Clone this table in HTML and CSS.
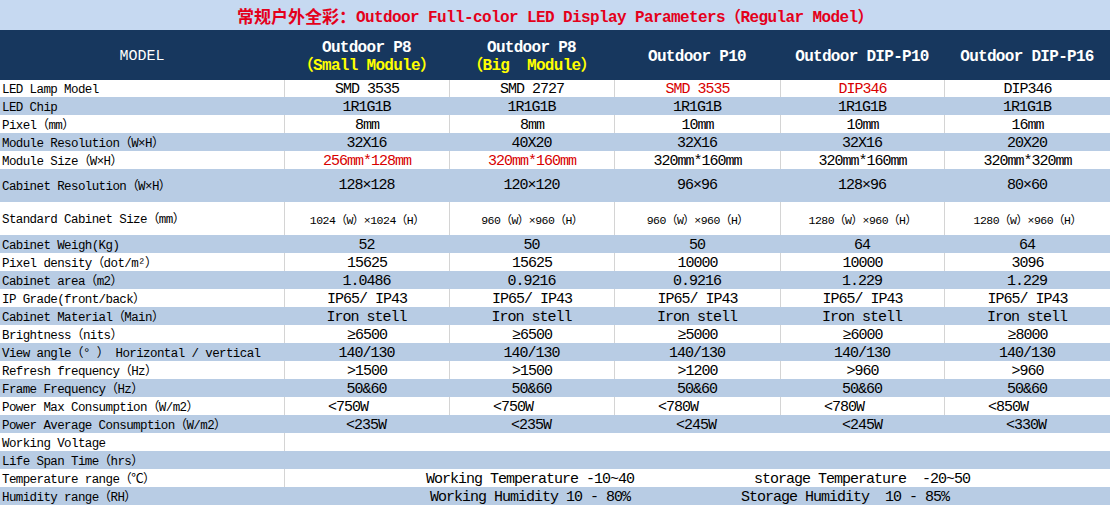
FILE: index.html
```html
<!DOCTYPE html>
<html>
<head>
<meta charset="utf-8">
<link rel="stylesheet" href="styles.css">
</head>
<body>
<div class="sheet">
  <div class="title"><span class="cn">常规户外全彩：</span>Outdoor Full-color LED Display Parameters（Regular Model）</div>

  <div class="row head">
    <div class="model">MODEL</div>
    <div><span>Outdoor P8</span><span class="yel">（Small Module）</span></div>
    <div><span>Outdoor P8</span><span class="yel">（Big&nbsp; Module）</span></div>
    <div><span>Outdoor P10</span></div>
    <div><span>Outdoor DIP-P10</span></div>
    <div><span>Outdoor DIP-P16</span></div>
  </div>

  <div class="row w first">
    <div class="lbl">LED Lamp Model</div>
    <div>SMD 3535</div><div>SMD 2727</div><div class="red">SMD 3535</div><div class="red">DIP346</div><div>DIP346</div>
  </div>
  <div class="row b">
    <div class="lbl">LED Chip</div>
    <div>1R1G1B</div><div>1R1G1B</div><div>1R1G1B</div><div>1R1G1B</div><div>1R1G1B</div>
  </div>
  <div class="row w">
    <div class="lbl">Pixel（mm）</div>
    <div>8mm</div><div>8mm</div><div>10mm</div><div>10mm</div><div>16mm</div>
  </div>
  <div class="row b">
    <div class="lbl">Module Resolution（W×H）</div>
    <div>32X16</div><div>40X20</div><div>32X16</div><div>32X16</div><div>20X20</div>
  </div>
  <div class="row w">
    <div class="lbl">Module Size（W×H）</div>
    <div class="red">256mm*128mm</div><div class="red">320mm*160mm</div><div>320mm*160mm</div><div>320mm*160mm</div><div>320mm*320mm</div>
  </div>
  <div class="row b tall">
    <div class="lbl">Cabinet Resolution（W×H）</div>
    <div>128×128</div><div>120×120</div><div>96×96</div><div>128×96</div><div>80×60</div>
  </div>
  <div class="row w tall small">
    <div class="lbl">Standard Cabinet Size（mm）</div>
    <div>1024（W）×1024（H）</div><div>960（W）×960（H）</div><div>960（W）×960（H）</div><div>1280（W）×960（H）</div><div>1280（W）×960（H）</div>
  </div>
  <div class="row b">
    <div class="lbl">Cabinet Weigh(Kg)</div>
    <div>52</div><div>50</div><div>50</div><div>64</div><div>64</div>
  </div>
  <div class="row w">
    <div class="lbl">Pixel density（dot/m²）</div>
    <div>15625</div><div>15625</div><div>10000</div><div>10000</div><div>3096</div>
  </div>
  <div class="row b">
    <div class="lbl">Cabinet area（m2）</div>
    <div>1.0486</div><div>0.9216</div><div>0.9216</div><div>1.229</div><div>1.229</div>
  </div>
  <div class="row w">
    <div class="lbl">IP Grade(front/back）</div>
    <div>IP65/ IP43</div><div>IP65/ IP43</div><div>IP65/ IP43</div><div>IP65/ IP43</div><div>IP65/ IP43</div>
  </div>
  <div class="row b">
    <div class="lbl">Cabinet Material（Main）</div>
    <div>Iron stell</div><div>Iron stell</div><div>Iron stell</div><div>Iron stell</div><div>Iron stell</div>
  </div>
  <div class="row w">
    <div class="lbl">Brightness（nits）</div>
    <div>≥6500</div><div>≥6500</div><div>≥5000</div><div>≥6000</div><div>≥8000</div>
  </div>
  <div class="row b">
    <div class="lbl">View angle（° ） Horizontal / vertical</div>
    <div>140/130</div><div>140/130</div><div>140/130</div><div>140/130</div><div>140/130</div>
  </div>
  <div class="row w">
    <div class="lbl">Refresh frequency（Hz）</div>
    <div>&gt;1500</div><div>&gt;1500</div><div>&gt;1200</div><div>&gt;960</div><div>&gt;960</div>
  </div>
  <div class="row b">
    <div class="lbl">Frame Frequency（Hz）</div>
    <div>50&amp;60</div><div>50&amp;60</div><div>50&amp;60</div><div>50&amp;60</div><div>50&amp;60</div>
  </div>
  <div class="row w pmax">
    <div class="lbl">Power Max Consumption（W/m2）</div>
    <div>&lt;750W</div><div>&lt;750W</div><div>&lt;780W</div><div>&lt;780W</div><div>&lt;850W</div>
  </div>
  <div class="row b pavg">
    <div class="lbl">Power Average Consumption（W/m2）</div>
    <div>&lt;235W</div><div>&lt;235W</div><div>&lt;245W</div><div>&lt;245W</div><div>&lt;330W</div>
  </div>
  <div class="row w">
    <div class="lbl">Working Voltage</div>
    <div class="merge"></div>
  </div>
  <div class="row b">
    <div class="lbl">Life Span Time（hrs）</div>
    <div class="merge"></div>
  </div>
  <div class="row w">
    <div class="lbl">Temperature range（℃）</div>
    <div class="merge split temp"><span>Working Temperature -10~40</span><span>storage Temperature&nbsp; -20~50</span></div>
  </div>
  <div class="row b">
    <div class="lbl">Humidity range（RH）</div>
    <div class="merge split hum"><span>Working Humidity 10 - 80%</span><span>Storage Humidity&nbsp; 10 - 85%</span></div>
  </div>
</div>
</body>
</html>
```

FILE: styles.css
```css
* { box-sizing: border-box; }
html, body { margin: 0; padding: 0; background: #fff; }
body {
  font-family: "Liberation Mono", "Noto Sans CJK SC", monospace;
  color: #000;
}
.sheet { width: 1110px; }

.title {
  height: 30px;
  background: #c6d9f1;
  display: flex;
  align-items: center;
  justify-content: center;
  color: #e4001b;
  font-weight: bold;
  font-size: 16px;
  letter-spacing: -0.6px;
  white-space: nowrap;
}
.title .cn { font-size: 17px; letter-spacing: 0; }

.row {
  display: grid;
  grid-template-columns: 284px 165px 165px 166px 164px 166px;
  height: 18px;
  font-size: 15px;
  letter-spacing: -1px;
}
.row > div {
  display: flex;
  align-items: center;
  justify-content: center;
  white-space: nowrap;
  overflow: hidden;
  padding-top: 2px;
}
.row > .lbl {
  justify-content: flex-start;
  padding-left: 2px;
  padding-top: 3px;
  font-size: 12.5px;
  line-height: 14px;
  letter-spacing: -0.6px;
}
.row.first { height: 17px; }
.row.tall { height: 33px; }
.row.tall > div { padding-top: 0; }
.row.tall > .lbl { padding-top: 2px; }
.row.small > div:not(.lbl) { font-size: 11.5px; letter-spacing: -0.5px; }

.w { background: #fff; }
.w > div + div { border-left: 1px solid #d4d4d4; }
.b { background: #b8cce4; }

.row.head {
  height: 50px;
  background: #17375e;
  color: #fff;
}
.row.head > div {
  flex-direction: column;
  font-weight: bold;
  font-size: 16px;
  letter-spacing: -0.7px;
  line-height: 18px;
  padding-top: 4px;
}
.row.head > .model {
  font-weight: normal;
  font-size: 15px;
  letter-spacing: 0;
}
.yel { color: #ffff00; }
.red { color: #d80000; }

.row.pmax > div:not(.lbl) { justify-content: flex-start; padding-left: 43px; }
.row.pavg > div:not(.lbl) { justify-content: flex-start; padding-left: 62px; }

.row > .merge { grid-column: 2 / -1; }
.row > .split { justify-content: flex-start; }
.row > .temp { padding-left: 141px; }
.temp span:last-child { margin-left: 120px; }
.row > .hum { padding-left: 146px; }
.hum span:last-child { margin-left: 111px; }
```
